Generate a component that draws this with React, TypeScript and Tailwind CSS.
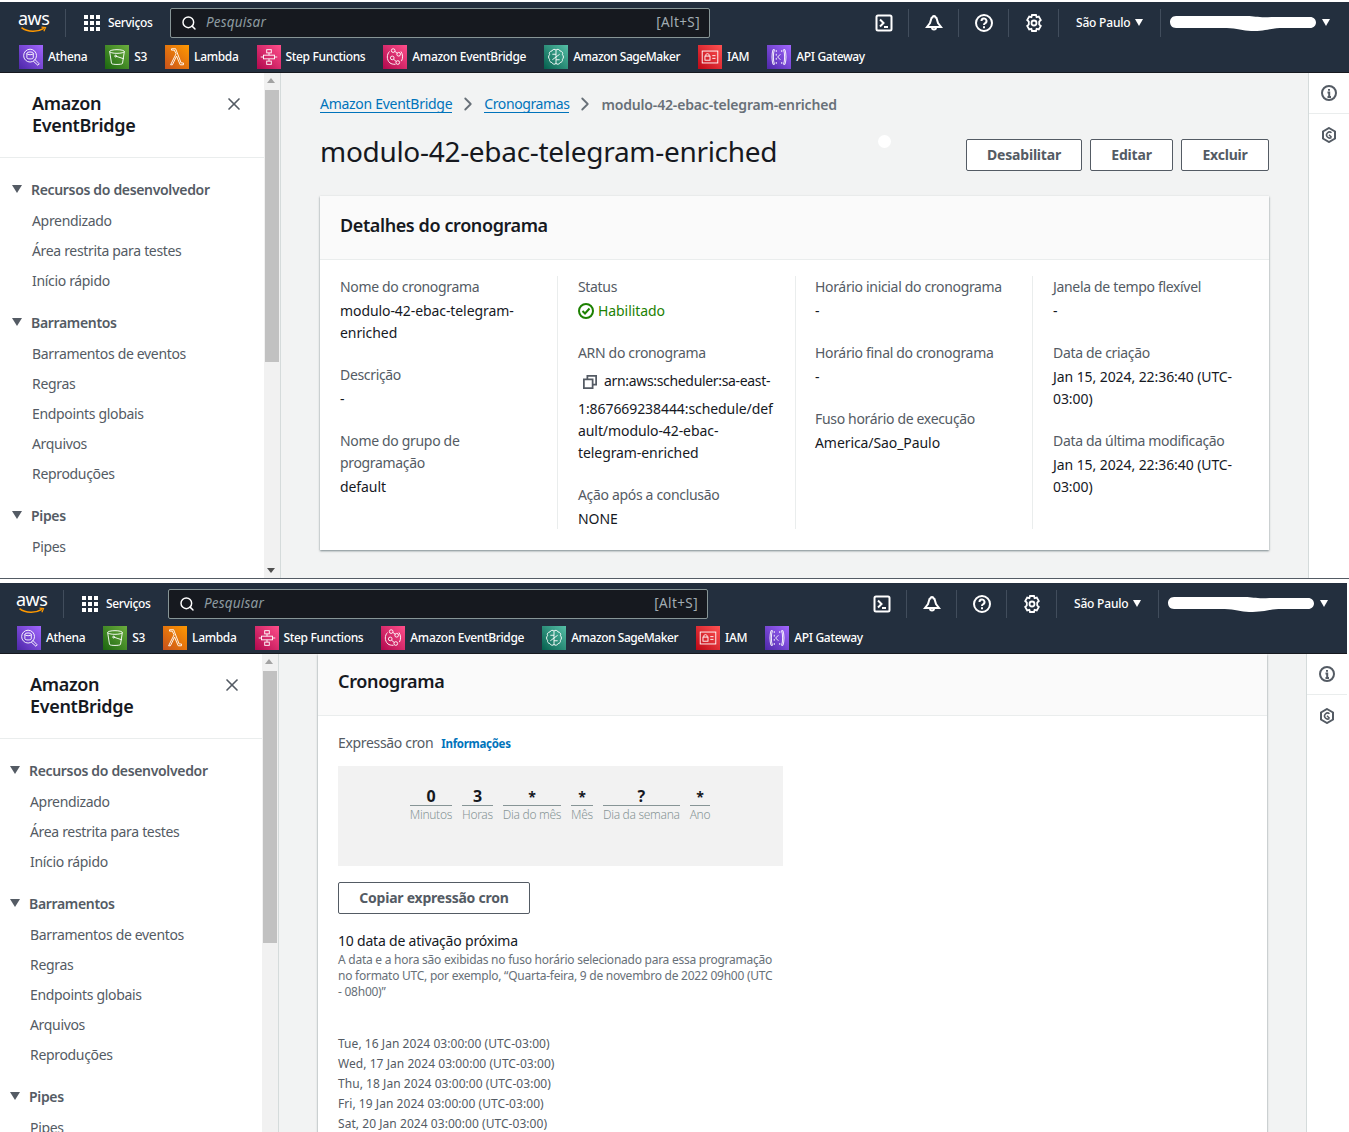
import { ChevronRight, X, Search } from "lucide-react";
import type { ReactNode } from "react";

const font = "font-['Noto_Sans','Open_Sans',sans-serif]";

function Tile({ from, to, children }: { from: string; to: string; children: ReactNode }) {
  return (
    <span
      className="flex w-6 h-6 shrink-0 items-center justify-center"
      style={{ background: `linear-gradient(45deg, ${from}, ${to})` }}
    >
      <svg viewBox="0 0 24 24" className="w-[22px] h-[22px]" fill="none" stroke="#fff" strokeWidth="1">
        {children}
      </svg>
    </span>
  );
}

const services = [
  {
    name: "Athena",
    from: "#4d27a8",
    to: "#a166ff",
    icon: (
      <>
        <circle cx="11" cy="10.5" r="7" />
        <path d="M14.5 16.5l5 4.500 1.500-1.500-5-5" />
        <ellipse cx="11" cy="8" rx="3.5" ry="1.5" />
        <path d="M7.500 8v5c0 1.500 7 1.500 7 0V8" />
      </>
    ),
  },
  {
    name: "S3",
    from: "#1b660f",
    to: "#6cae3e",
    icon: (
      <>
        <ellipse cx="12" cy="6" rx="8" ry="2" />
        <path d="M4 6l2 13c.5 1.500 11.500 1.500 12 0l2-13M10.500 11l9 3" />
        <circle cx="10.5" cy="11" r="1" />
      </>
    ),
  },
  {
    name: "Lambda",
    from: "#c8511b",
    to: "#ff9900",
    icon: <path d="M5 20.500l6-12L9 4.500H6V3h4.500l6 15.500H19V20.500h-3.500L11.500 11l-4.500 9.500z" />,
  },
  {
    name: "Step Functions",
    from: "#b0084d",
    to: "#ff4f8b",
    icon: (
      <>
        <rect x="9.5" y="4" width="5" height="3.5" />
        <rect x="6" y="10" width="12" height="4" />
        <rect x="9.5" y="16.5" width="5" height="3.5" />
        <path d="M12 7.500V10M12 14v2.500M6 12H3M18 12h3" />
      </>
    ),
  },
  {
    name: "Amazon EventBridge",
    from: "#b0084d",
    to: "#ff4f8b",
    icon: (
      <>
        <circle cx="10" cy="5" r="2" />
        <circle cx="16" cy="9" r="2" />
        <circle cx="9" cy="13" r="2" />
        <circle cx="15" cy="18" r="2" />
        <path d="M6 6c-3 3-3.500 9 .5 12.500 1.500 1 3 1.500 6 1.500M12 6l2.500 2M10.500 14.500l3 2.500M18.500 6c2 3 2.500 7 .5 10.500" />
      </>
    ),
  },
  {
    name: "Amazon SageMaker",
    from: "#055f4e",
    to: "#56c0a7",
    icon: (
      <>
        <path d="M12 4.500c-1-1.500-4-1-4.500 1-2 0-3.500 2-2.500 4-1.500 1.500-1.500 3.500 0 5-.5 2 1 3.500 2.500 3.500.5 2 3.500 2.500 4.500 1 1 1.500 4 1 4.500-1 1.500 0 3-1.500 2.500-3.500 1.500-1.500 1.500-3.500 0-5 1-2-.5-4-2.500-4-.5-2-3.500-2.500-4.500-1z" />
        <path d="M12 4.500v15M8 9h4M16 9l-4 3M8 15l4-3M16 15h-4" />
      </>
    ),
  },
  {
    name: "IAM",
    from: "#bd0816",
    to: "#ff5252",
    icon: (
      <>
        <rect x="3.5" y="5.5" width="17" height="13" />
        <rect x="6.5" y="11" width="5.5" height="4.5" />
        <path d="M7.500 11V9.500c0-1.500 3.500-1.500 3.500 0V11M14.500 10.500h3.500M14.500 13.500h3.500" />
      </>
    ),
  },
  {
    name: "API Gateway",
    from: "#4d27a8",
    to: "#a166ff",
    icon: (
      <>
        <path d="M7 4H5.500C4 8 4 16 5.500 20H7c-1.500-4-1.500-12 0-16zM17 4h1.500c1.500 4 1.500 12 0 16H17c1.500-4 1.500-12 0-16z" />
        <path d="M13.500 9l-3 3 3 3M9 4.500v2M9 8.500v2M9 13v2M9 17.500v2M15 4.500v2M15 17.500v2" />
      </>
    ),
  },
];

function HeaderIcon({ children }: { children: ReactNode }) {
  return (
    <div className="flex w-[50px] h-[28px] items-center justify-center border-r border-[#414d5c]">
      <svg viewBox="0 0 20 20" className="w-5 h-5" fill="none" stroke="#fff" strokeWidth="2">
        {children}
      </svg>
    </div>
  );
}

function Header() {
  return (
    <header className="h-[71px] shrink-0 bg-[#232f3e] border-b border-[#16191f] text-white tracking-[-0.33px]">
      <div className="flex h-[41px] items-center pl-[18px]">
        <div className="relative w-[30px] h-[30px] shrink-0">
          <span className="block text-[18px] leading-[20px] text-white tracking-[-0.5px]">aws</span>
          <svg viewBox="0 0 32 10" className="absolute left-0 top-[18px] w-[31px] h-[8px]" fill="none">
            <path d="M1 2c8 6 20 6 28 1" stroke="#f90" strokeWidth="2" />
            <path d="M26 1.500l5 .5-2 4.500" stroke="#f90" strokeWidth="1.5" />
          </svg>
        </div>
        <div className="ml-[17px] w-px h-7 bg-[#414d5c]" />
        <div className="ml-[18px] grid grid-cols-3 gap-[2px] w-[16px]">
          {Array.from({ length: 9 }).map((_, i) => (
            <span key={i} className="w-1 h-1 bg-white block" />
          ))}
        </div>
        <span className="ml-2 w-[45px] text-[12px] font-medium whitespace-nowrap">Serviços</span>
        <div className="ml-[17px] flex w-[540px] h-[30px] items-center rounded-[2px] border border-[#879596] bg-[#16191f] pl-[10px] pr-[9px]">
          <Search className="w-4 h-4 text-white" strokeWidth={2.2} />
          <span className="ml-[9px] text-[13.5px] italic text-[#8d9ba0] tracking-[0.2px]">Pesquisar</span>
          <span className="ml-auto text-[13.5px] text-[#a2adb3] tracking-[0.4px]">[Alt+S]</span>
        </div>
        <div className="ml-[149px] flex items-center">
          <HeaderIcon>
            <rect x="2.5" y="2.5" width="15" height="15" rx="1.5" />
            <path d="M6 6.500L9.500 10 6 13.500M10 14h4" />
          </HeaderIcon>
          <HeaderIcon>
            <path d="M8.500 4.500a1.500 1.500 0 1 1 3 0l1 .5 1.500 5 3 4H3l3-4 1.500-5zM8 14.500a2 2 0 0 0 4 0" />
          </HeaderIcon>
          <HeaderIcon>
            <circle cx="10" cy="10" r="8" />
            <path d="M7.500 8a2.500 2.500 0 1 1 3.500 2.300c-.7.400-1 .8-1 1.700M10 13.200V15.200" />
          </HeaderIcon>
          <HeaderIcon>
            <path d="M8 2h4l.6 2.200 2.200-.6 2 3.400-1.600 1.600v2.800l1.600 1.600-2 3.400-2.200-.6L12 18H8l-.6-2.200-2.200.6-2-3.400 1.600-1.600V8.600L3.200 7l2-3.400 2.200.6z" strokeWidth="1.8" />
            <circle cx="10" cy="10" r="2.5" strokeWidth="1.8" />
          </HeaderIcon>
          <span className="ml-[17px] text-[12px] font-medium tracking-[-0.2px]">São Paulo</span>
          <span className="ml-[5px] w-0 h-0 border-x-[4.5px] border-x-transparent border-t-[7px] border-t-white" />
          <div className="ml-[17px] w-px h-7 bg-[#414d5c]" />
          <svg viewBox="0 0 146 18" className="ml-[8px] w-[148px] h-[18px]" preserveAspectRatio="none">
            <path d="M7 2h70c8 0 12 2 24 1h38c8 0 8 11 0 11h-26c-12 0-18 3-32 3-8 0-14-3-24-3H7C-1 14-1 2 7 2z" fill="#fff" />
          </svg>
          <span className="ml-[5px] w-0 h-0 border-x-[4.5px] border-x-transparent border-t-[7px] border-t-white" />
        </div>
      </div>
      <div className="flex h-[29px] items-start pt-[2px] pl-[19px] gap-[18px]">
        {services.map((s) => (
          <div key={s.name} className="flex items-center gap-[5px]">
            <Tile from={s.from} to={s.to}>
              {s.icon}
            </Tile>
            <span className={`text-[12px] font-medium whitespace-nowrap ${s.name === "Amazon SageMaker" ? "tracking-[-0.45px]" : ""}`}>
              {s.name}
            </span>
          </div>
        ))}
      </div>
    </header>
  );
}

function NavSection({ title, items }: { title: string; items: string[] }) {
  return (
    <div className="mb-[19px]">
      <div className="flex h-[22px] items-center pl-[12px] mb-[10px]">
        <span className="w-0 h-0 border-x-[5.5px] border-x-transparent border-t-[8px] border-t-[#545b64]" />
        <span className="ml-[9px] text-[14px] font-semibold text-[#545b64]">{title}</span>
      </div>
      <ul className="pl-[32px] flex flex-col gap-[8px]">
        {items.map((i) => (
          <li key={i} className="h-[22px] leading-[22px] text-[14px] text-[#545b64]">
            {i}
          </li>
        ))}
      </ul>
    </div>
  );
}

function Sidebar() {
  return (
    <div className="flex w-[281px] shrink-0 h-full bg-white border-r border-[#d5dbdb]">
      <aside className="w-[264px] shrink-0 h-full overflow-hidden">
        <div className="flex h-[85px] items-start justify-between pl-[32px] pr-[20px] pt-[19px] border-b border-[#eaeded]">
          <h2 className="text-[18px] leading-[22px] font-semibold text-[#16191f]">
            Amazon
            <br />
            EventBridge
          </h2>
          <X className="w-[20px] h-[20px] text-[#545b64] mt-[2px]" strokeWidth={2} />
        </div>
        <nav className="pt-[20px]">
          <NavSection title="Recursos do desenvolvedor" items={["Aprendizado", "Área restrita para testes", "Início rápido"]} />
          <NavSection
            title="Barramentos"
            items={["Barramentos de eventos", "Regras", "Endpoints globais", "Arquivos", "Reproduções"]}
          />
          <NavSection title="Pipes" items={["Pipes"]} />
        </nav>
      </aside>
      <div className="relative w-[16px] h-full bg-[#f1f1f1]">
        <span className="absolute left-[3px] top-[5px] w-0 h-0 border-x-[4px] border-x-transparent border-b-[5px] border-b-[#a3a3a3]" />
        <div className="absolute left-[1px] top-[17px] w-[14px] h-[272px] bg-[#c1c1c1]" />
        <span className="absolute left-[3px] bottom-[5px] w-0 h-0 border-x-[4px] border-x-transparent border-t-[5px] border-t-[#505050]" />
      </div>
    </div>
  );
}

function Rail() {
  return (
    <div className="w-[41px] shrink-0 h-full bg-white border-l border-[#d5dbdb]">
      <div className="flex h-[41px] items-center justify-center border-b border-[#eaeded]">
        <svg viewBox="0 0 16 16" className="w-4 h-4" fill="none" stroke="#545b64" strokeWidth="2">
          <circle cx="8" cy="8" r="7" />
          <path d="M6.500 7.500H8.200V12M6.500 12h3.500M8 4v1.800" />
        </svg>
      </div>
      <div className="flex h-[41px] items-center justify-center">
        <svg viewBox="0 0 16 16" className="w-4 h-4" fill="none" stroke="#545b64" strokeWidth="2">
          <path d="M8 1l6 3.500v7L8 15l-6-3.500v-7z" />
          <path d="M10.500 10.300A3 3 0 1 1 10.500 5.700M8 7.800l2.500 2.500" strokeWidth="1.5" />
        </svg>
      </div>
    </div>
  );
}

function Field({ label, children }: { label: ReactNode; children: ReactNode }) {
  return (
    <div className="mb-[20px] leading-[22px]">
      <div className="text-[#545b64] mb-[2px]">{label}</div>
      <div className="text-[#16191f] tracking-[-0.08px]">{children}</div>
    </div>
  );
}

function DetailScreen() {
  return (
    <main className="relative flex-1 min-w-0 h-full bg-[#f2f3f3] pl-[39px] pr-[39px] pt-[20px] overflow-hidden">
      <span className="absolute left-[597px] top-[62px] w-[13px] h-[13px] rounded-full bg-white" />
      <nav className="flex items-center h-[22px] text-[14px]">
        <a className="text-[#0073bb] border-b border-[#0073bb] leading-[17px] tracking-[-0.28px]">Amazon EventBridge</a>
        <ChevronRight className="w-[22px] h-[22px] ml-[5px] mr-[5px] text-[#687078]" strokeWidth={2} />
        <a className="text-[#0073bb] border-b border-[#0073bb] leading-[17px] tracking-[-0.4px]">Cronogramas</a>
        <ChevronRight className="w-[22px] h-[22px] ml-[5px] mr-[5px] text-[#687078]" strokeWidth={2} />
        <span className="font-semibold text-[#687078] tracking-[-0.17px]">modulo-42-ebac-telegram-enriched</span>
      </nav>
      <div className="flex items-start justify-between mt-[24px] h-[58px]">
        <h1 className="text-[28px] leading-[36px] text-[#16191f] -mt-[6px] tracking-[-0.3px]">modulo-42-ebac-telegram-enriched</h1>
        <div className="flex gap-[8px]">
          {[
            ["Desabilitar", "w-[116px]"],
            ["Editar", "w-[83px]"],
            ["Excluir", "w-[88px]"],
          ].map(([t, w]) => (
            <button key={t} className={`${w} h-[32px] pb-[1px] border border-[#545b64] rounded-[2px] bg-white text-[14px] font-bold text-[#545b64] tracking-[-0.2px]`}>
              {t}
            </button>
          ))}
        </div>
      </div>
      <section className="mt-[-1px] bg-white shadow-[0_1px_2px_rgba(0,28,36,0.5)] h-[354px]">
        <div className="h-[64px] flex items-center px-[20px] bg-[#fafafa] border-b border-[#eaeded]">
          <h2 className="text-[18px] font-semibold text-[#16191f] -mt-[4px] tracking-[-0.4px]">Detalhes do cronograma</h2>
        </div>
        <div className="grid grid-cols-[238px_238px_237px_1fr] pt-[16px] text-[14px]">
          <div className="pl-[20px] pr-[20px] h-[253px] border-r border-[#eaeded]">
            <Field label="Nome do cronograma">modulo-42-ebac-telegram-enriched</Field>
            <Field label="Descrição">-</Field>
            <Field label="Nome do grupo de programação">default</Field>
          </div>
          <div className="pl-[20px] pr-[20px] h-[253px] border-r border-[#eaeded]">
            <Field label="Status">
              <span className="flex items-center gap-[4px] text-[#1d8102]">
                <svg viewBox="0 0 16 16" className="w-4 h-4" fill="none" stroke="#1d8102" strokeWidth="2">
                  <circle cx="8" cy="8" r="7" />
                  <path d="M4.500 8l2.500 2.500L11.500 5.500" />
                </svg>
                Habilitado
              </span>
            </Field>
            <Field label="ARN do cronograma">
              <span className="block [overflow-wrap:anywhere]">
                <span className="inline-flex h-[32px] items-center align-middle">
                  <svg viewBox="0 0 16 16" className="w-[14px] h-[14px] ml-[5px] mr-[7px]" fill="none" stroke="#545b64" strokeWidth="2">
                    <rect x="1" y="5" width="10" height="10" />
                    <path d="M5 5V1h10v10h-4" />
                  </svg>
                </span>
                <span className="tracking-[-0.33px]">arn:aws:scheduler:sa-east-</span>
                1:867669238444:schedule/default/modulo-42-ebac-telegram-enriched
              </span>
            </Field>
            <Field label="Ação após a conclusão">NONE</Field>
          </div>
          <div className="pl-[19px] pr-[20px] h-[253px] border-r border-[#eaeded]">
            <Field label="Horário inicial do cronograma">-</Field>
            <Field label="Horário final do cronograma">-</Field>
            <Field label="Fuso horário de execução">America/Sao_Paulo</Field>
          </div>
          <div className="pl-[20px] pr-[20px]">
            <Field label="Janela de tempo flexível">-</Field>
            <Field label="Data de criação">Jan 15, 2024, 22:36:40 (UTC-03:00)</Field>
            <Field label="Data da última modificação">Jan 15, 2024, 22:36:40 (UTC-03:00)</Field>
          </div>
        </div>
      </section>
    </main>
  );
}

const cronParts = [
  ["0", "Minutos", "text-[16px]"],
  ["3", "Horas", "text-[16px]"],
  ["*", "Dia do mês", "text-[14px]"],
  ["*", "Mês", "text-[14px]"],
  ["?", "Dia da semana", "text-[16px]"],
  ["*", "Ano", "text-[14px]"],
];

const dates = [
  "Tue, 16 Jan 2024 03:00:00 (UTC-03:00)",
  "Wed, 17 Jan 2024 03:00:00 (UTC-03:00)",
  "Thu, 18 Jan 2024 03:00:00 (UTC-03:00)",
  "Fri, 19 Jan 2024 03:00:00 (UTC-03:00)",
  "Sat, 20 Jan 2024 03:00:00 (UTC-03:00)",
];

function ScheduleScreen() {
  return (
    <main className="flex-1 min-w-0 h-full bg-[#f2f3f3] pl-[39px] pr-[39px] overflow-hidden">
      <section className="bg-white shadow-[0_1px_2px_rgba(0,28,36,0.5)] h-[600px]">
        <div className="h-[62px] flex items-center px-[20px] bg-[#fafafa] border-b border-[#eaeded]">
          <h2 className="text-[18px] font-semibold text-[#16191f] -mt-[6px]">Cronograma</h2>
        </div>
        <div className="pl-[20px] pt-[16px] w-[485px]">
          <div className="flex items-baseline gap-[8px] h-[22px]">
            <span className="text-[14px] text-[#545b64]">Expressão cron</span>
            <span className="text-[11.5px] font-bold text-[#0073bb] tracking-[-0.3px]">Informações</span>
          </div>
          <div className="mt-[12px] w-[445px] h-[100px] bg-[#f2f2f2] flex justify-center gap-[10px] pt-[21px] pr-[1px]">
            {cronParts.map(([v, l, size]) => (
              <div key={l} className="text-center">
                <div className={`h-[19px] leading-[19px] font-bold text-[#16191f] border-b border-[#879596] ${size}`}>{v}</div>
                <div className="text-[12px] leading-[18px] font-light text-[#879596] tracking-[-0.3px]">{l}</div>
              </div>
            ))}
          </div>
          <button className="mt-[16px] w-[192px] h-[32px] pb-[1px] border border-[#545b64] rounded-[2px] text-[14px] font-bold text-[#545b64] bg-white tracking-[-0.24px]">
            Copiar expressão cron
          </button>
          <div className="mt-[17px] text-[14px] leading-[20px] text-[#16191f] tracking-[-0.2px]">10 data de ativação próxima</div>
          <p className="mt-[1px] text-[12px] leading-[16px] text-[#687078] w-[440px] tracking-[-0.25px]">
            A data e a hora são exibidas no fuso horário selecionado para essa programação no formato UTC, por exemplo, “Quarta-feira, 9 de novembro de 2022 09h00 (UTC - 08h00)”
          </p>
          <ul className="mt-[34px] text-[12px] leading-[20px] text-[#545b64] tracking-[0.05px]">
            {dates.map((d) => (
              <li key={d}>{d}</li>
            ))}
          </ul>
        </div>
      </section>
    </main>
  );
}

export default function App() {
  return (
    <div className={`${font} relative w-[1349px] h-[1132px] overflow-hidden bg-white tracking-[-0.33px]`}>
      <div className="pt-[2px] h-[579px] border-b border-[#545b64] flex flex-col">
        <Header />
        <div className="flex flex-1 min-h-0">
          <Sidebar />
          <DetailScreen />
          <Rail />
        </div>
      </div>
      <div className="mt-[4px] -ml-[2px] w-[1349px] h-[580px] flex flex-col">
        <Header />
        <div className="flex flex-1 min-h-0">
          <Sidebar />
          <ScheduleScreen />
          <Rail />
        </div>
      </div>
    </div>
  );
}
